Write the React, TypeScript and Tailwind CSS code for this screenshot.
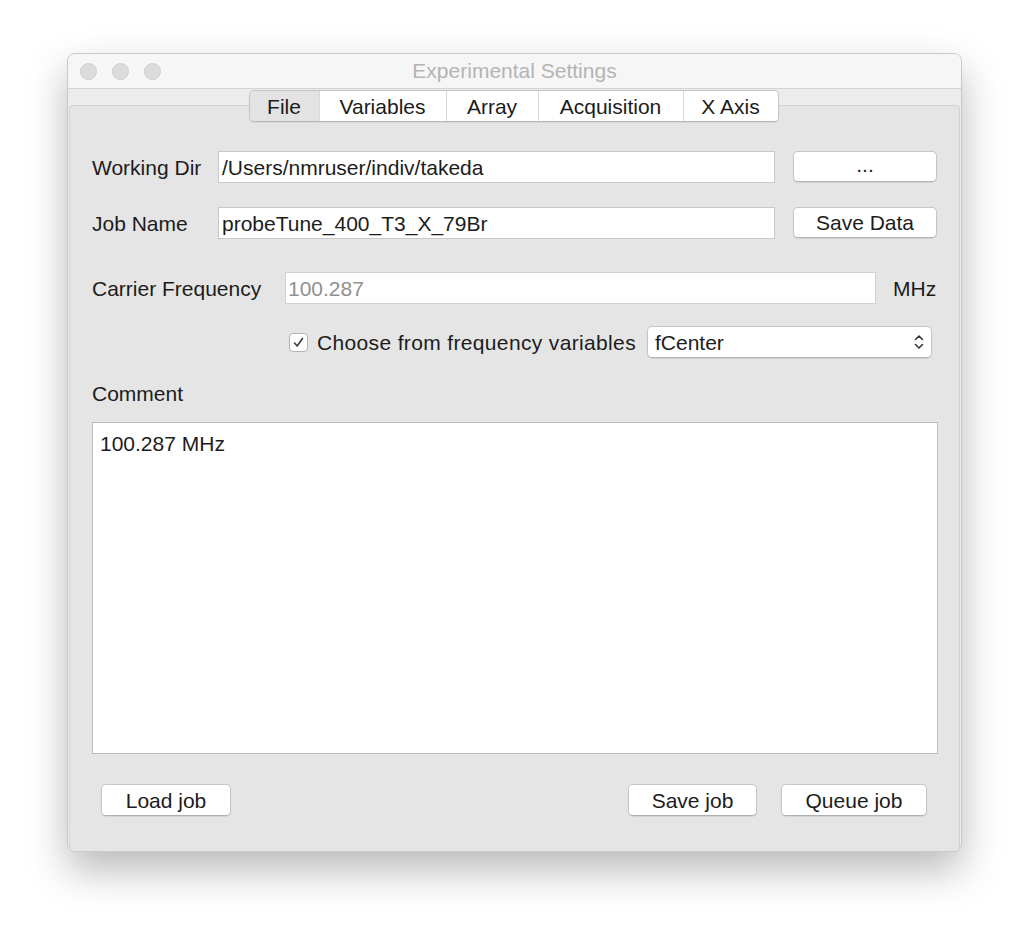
import React from "react";

const font = { fontFamily: '"Liberation Sans", Arial, sans-serif' };

function MacButton({ children, className = "" }: { children: React.ReactNode; className?: string }) {
  return (
    <div
      className={
        "flex items-center justify-center bg-white rounded-[5px] border border-[#c6c6c6] border-b-[#b0b0b0] shadow-[0_1px_1px_rgba(0,0,0,0.08)] text-[21px] text-[#1c1c1c] leading-none " +
        className
      }
    >
      {children}
    </div>
  );
}

export default function App() {
  const tabs = ["File", "Variables", "Array", "Acquisition", "X Axis"];
  const tabW = ["w-[69px]", "w-[127px]", "w-[92px]", "w-[145px]", "w-[95px]"];
  return (
    <div className="w-[1028px] h-[932px] bg-white overflow-hidden" style={font}>
      <div className="ml-[67px] mt-[53px] w-[895px] h-[799px] rounded-[8px] border border-[#c9c9c9] bg-[#ececec] shadow-[0_18px_40px_rgba(0,0,0,0.28)] flex flex-col overflow-hidden">
        {/* title bar */}
        <div className="h-[35px] shrink-0 bg-[#f6f6f6] border-b border-[#d3d3d3] flex items-center relative">
          <div className="flex gap-[15px] pl-[12px]">
            <div className="w-[17px] h-[17px] rounded-full bg-[#dcdcdc] border border-[#d0d0d0]" />
            <div className="w-[17px] h-[17px] rounded-full bg-[#dcdcdc] border border-[#d0d0d0]" />
            <div className="w-[17px] h-[17px] rounded-full bg-[#dcdcdc] border border-[#d0d0d0]" />
          </div>
          <div className="absolute inset-0 flex items-center justify-center text-[21px] text-[#b4b4b4] pointer-events-none">
            Experimental Settings
          </div>
        </div>
        {/* body */}
        <div className="flex-1 flex flex-col pt-[1px]">
          <div className="flex justify-center relative z-10 pr-[2px]">
            <div className="flex h-[32px] rounded-[5px] border border-[#c4c4c4] border-b-[#b5b5b5] overflow-hidden shadow-[0_1px_1px_rgba(0,0,0,0.06)]">
              {tabs.map((t, i) => (
                <div
                  key={t}
                  className={
                    tabW[i] +
                    " flex items-center justify-center text-[21px] leading-none text-[#1c1c1c] " +
                    (i === 0 ? "bg-[#e3e3e3]" : "bg-white border-l border-[#d9d9d9]")
                  }
                >
                  {t}
                </div>
              ))}
            </div>
          </div>
          <div className="-mt-[17px] mx-[1px] flex-1 bg-[#e5e5e5] border border-[#d2d2d2] border-b-0 rounded-t-[4px] flex flex-col pt-[45px] pl-[22px] pr-[22px] text-[21px] text-[#1c1c1c]">
            {/* Row 1 */}
            <div className="flex items-center h-[32px]">
              <div className="w-[126px] shrink-0 leading-none">Working Dir</div>
              <div className="w-[557px] h-[32px] bg-white border border-[#c9c9c9] flex items-center pl-[3px] leading-none">
                /Users/nmruser/indiv/takeda
              </div>
              <MacButton className="ml-[18px] w-[144px] h-[31px] self-start">
                <span className="-mt-[4px]">...</span>
              </MacButton>
            </div>
            {/* Row 2 */}
            <div className="flex items-center h-[32px] mt-[24px]">
              <div className="w-[126px] shrink-0 leading-none">Job Name</div>
              <div className="w-[557px] h-[32px] bg-white border border-[#c9c9c9] flex items-center pl-[3px] leading-none">
                probeTune_400_T3_X_79Br
              </div>
              <MacButton className="ml-[18px] w-[144px] h-[31px] self-start">Save Data</MacButton>
            </div>
            {/* Row 3 */}
            <div className="flex items-center h-[32px] mt-[33px]">
              <div className="w-[193px] shrink-0 leading-none">Carrier Frequency</div>
              <div className="w-[591px] h-[32px] bg-white border border-[#d2d2d2] flex items-center pl-[2px] leading-none text-[#8f8f8f]">
                100.287
              </div>
              <div className="ml-[17px] leading-none">MHz</div>
            </div>
            {/* Row 4 */}
            <div className="flex items-center h-[32px] mt-[22px]">
              <div className="ml-[197px] w-[19px] h-[19px] rounded-[4px] bg-white border border-[#b4b4b4] flex items-center justify-center">
                <svg width="13" height="13" viewBox="0 0 13 13">
                  <path d="M2.5 7 L5.2 10 L10.5 2.5" fill="none" stroke="#3a3a3a" strokeWidth="1.6" strokeLinecap="round" strokeLinejoin="round" />
                </svg>
              </div>
              <div className="ml-[9px] leading-none tracking-[0.35px]">Choose from frequency variables</div>
              <div className="flex-1" />
              <div className="mr-[5px] w-[285px] h-[32px] bg-white rounded-[5px] border border-[#c6c6c6] border-b-[#b0b0b0] shadow-[0_1px_1px_rgba(0,0,0,0.08)] flex items-center pl-[7px] pr-[6px] leading-none">
                <span className="flex-1">fCenter</span>
                <svg width="12" height="20" viewBox="0 0 12 20">
                  <path d="M2.5 7.5 L6 4 L9.5 7.5" fill="none" stroke="#333" strokeWidth="1.5" strokeLinecap="round" strokeLinejoin="round" />
                  <path d="M2.5 12.5 L6 16 L9.5 12.5" fill="none" stroke="#333" strokeWidth="1.5" strokeLinecap="round" strokeLinejoin="round" />
                </svg>
              </div>
            </div>
            {/* Comment */}
            <div className="mt-[23px] h-[24px] flex items-center leading-none">Comment</div>
            <div className="mt-[17px] w-[846px] h-[332px] bg-white border border-[#bdbdbd] pl-[7px] pt-[10px] leading-none">
              100.287 MHz
            </div>
            {/* Buttons */}
            <div className="flex mt-[30px] pl-[9px] pr-[10px]">
              <MacButton className="w-[130px] h-[32px]">Load job</MacButton>
              <div className="flex-1" />
              <MacButton className="w-[129px] h-[32px]">Save job</MacButton>
              <MacButton className="ml-[24px] w-[146px] h-[32px]">Queue job</MacButton>
            </div>
          </div>
        </div>
      </div>
    </div>
  );
}
